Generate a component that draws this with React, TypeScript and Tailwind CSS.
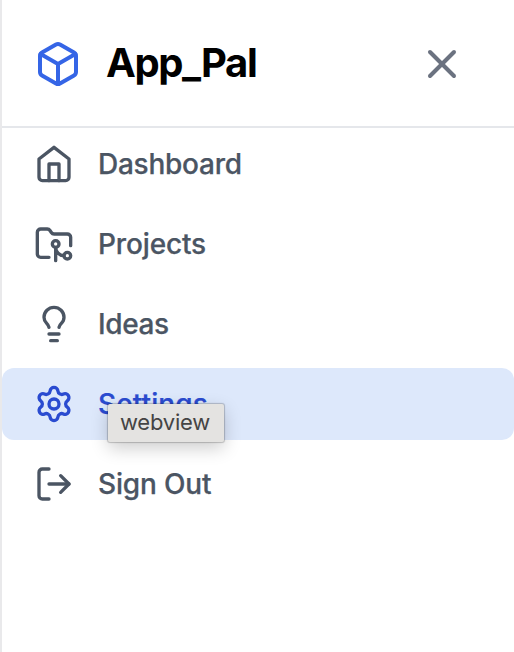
import { Box, X, FolderGit2, Lightbulb, Settings, LogOut } from "lucide-react";

function Home({ size = 40, strokeWidth = 2 }: { size?: number; strokeWidth?: number }) {
  return (
    <svg width={size} height={size} viewBox="0 0 24 24" fill="none" stroke="currentColor" strokeWidth={strokeWidth} strokeLinecap="round" strokeLinejoin="round">
      <path d="m3 9 9-7 9 7v11a2 2 0 0 1-2 2H5a2 2 0 0 1-2-2z" />
      <polyline points="9 22 9 12 15 12 15 22" />
    </svg>
  );
}

const items = [
  { label: "Dashboard", Icon: Home, spacing: "tracking-[-0.25px]" },
  { label: "Projects", Icon: FolderGit2, spacing: "tracking-[-0.15px]" },
  { label: "Ideas", Icon: Lightbulb, spacing: "tracking-[-0.4px]" },
  { label: "Settings", Icon: Settings, spacing: "tracking-[0.1px]", active: true },
  { label: "Sign Out", Icon: LogOut, spacing: "tracking-[-0.15px]" },
];

export default function App() {
  return (
    <div className="h-[652px] w-[514px] overflow-hidden border-l-2 border-[#e9e9eb] bg-white font-['Inter',sans-serif]">
      <header className="flex h-32 items-center justify-between border-b-2 border-[#e5e7eb] pt-0.5 pr-12 pl-8">
        <div className="flex items-center">
          <Box size={48} strokeWidth={2} className="text-[#3565e6]" />
          <span className="-mt-0.5 ml-6 text-[40px] font-bold tracking-[-1.4px] text-black">App_Pal</span>
        </div>
        <X size={48} strokeWidth={2} className="text-[#6b7280]" />
      </header>
      <nav className="flex flex-col gap-2">
        {items.map(({ label, Icon, spacing, active }) => (
          <div key={label} className={`relative flex h-[72px] items-center rounded-xl pl-8 ${active ? "bg-[#dde8fb] text-[#2a4bd0]" : "text-[#4b5563]"}`}>
            <Icon size={40} strokeWidth={2} />
            <span className={`ml-6 text-[28px] font-medium [-webkit-text-stroke:0.25px_currentColor] ${spacing}`}>{label}</span>
            {active && (
              <div className="absolute top-9 left-[106px] flex h-[38px] w-[116px] items-center justify-center rounded-[2px] bg-[#e4e3e1] pr-0.5 pb-0.5 text-[22px] tracking-[-0.2px] text-[#444] shadow-[0_0_1px_1px_rgba(0,0,0,0.2),0_6px_18px_rgba(0,0,0,0.2)]">
                webview
              </div>
            )}
          </div>
        ))}
      </nav>
    </div>
  );
}
